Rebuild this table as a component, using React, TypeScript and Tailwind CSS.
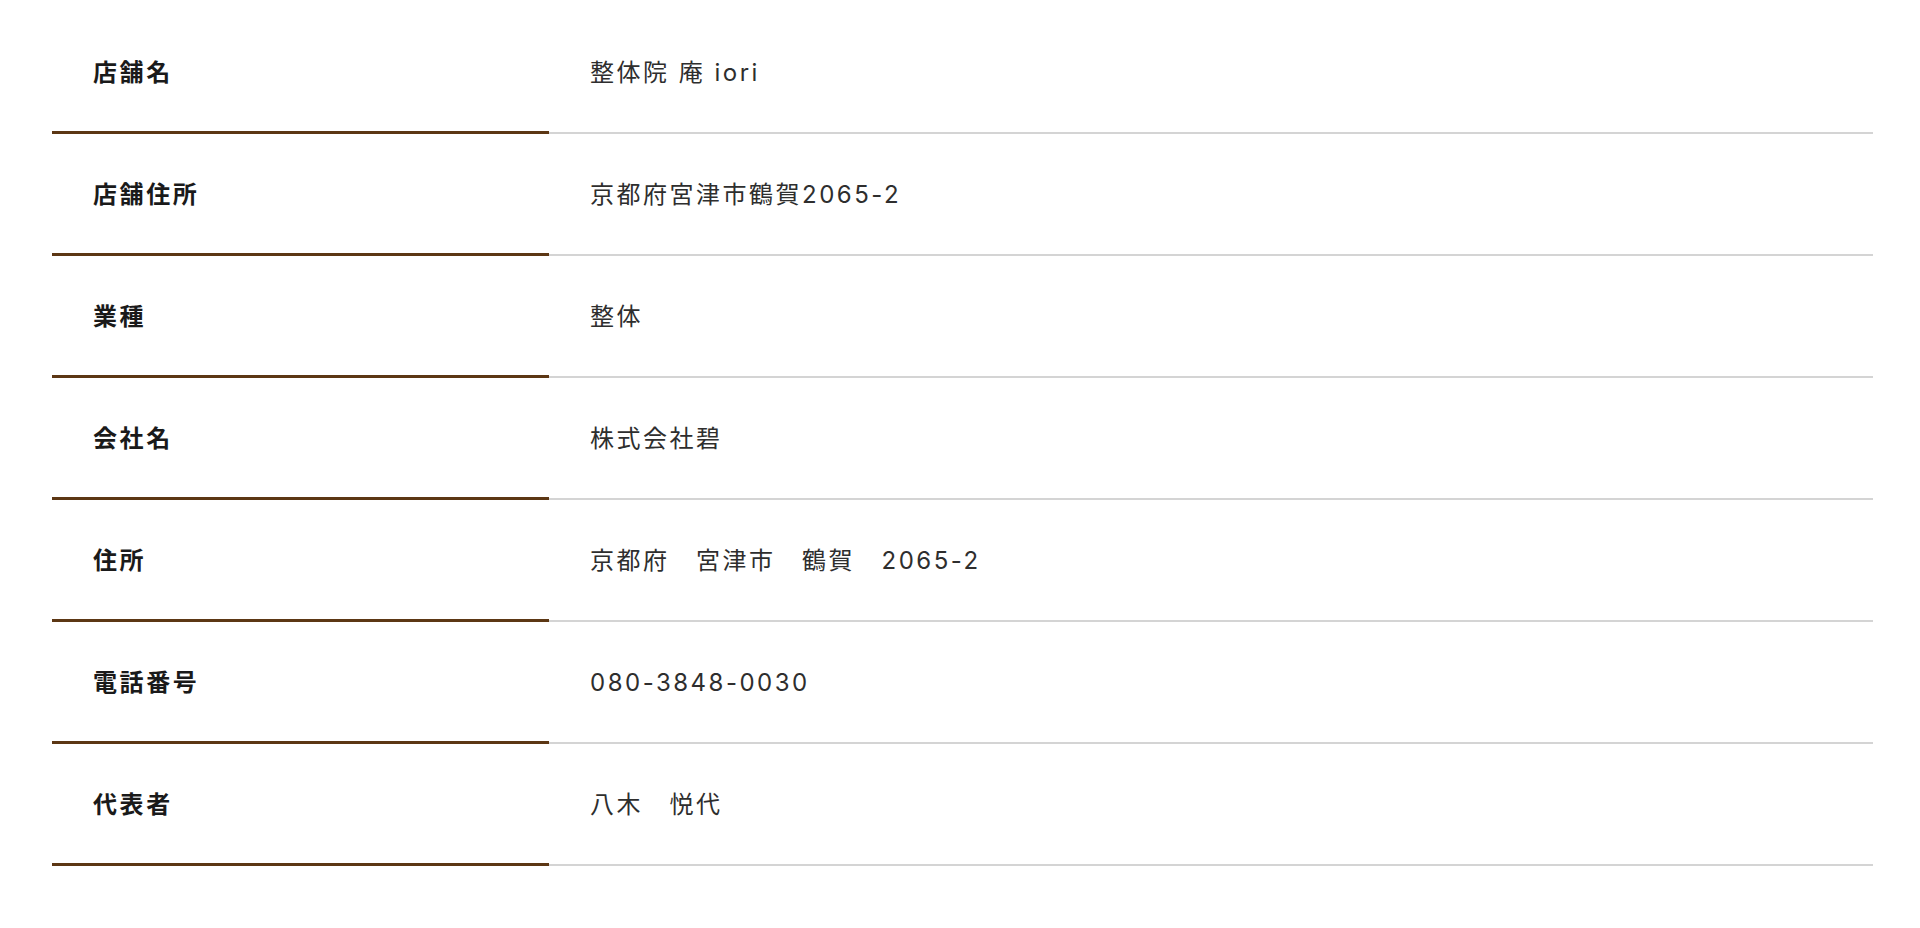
const ROWS: { label: string; value: string }[] = [
  { label: '店舗名', value: '整体院 庵 iori' },
  { label: '店舗住所', value: '京都府宮津市鶴賀2065-2' },
  { label: '業種', value: '整体' },
  { label: '会社名', value: '株式会社碧' },
  { label: '住所', value: '京都府　宮津市　鶴賀　2065-2' },
  { label: '電話番号', value: '080-3848-0030' },
  { label: '代表者', value: '八木　悦代' },
];

export default function App() {
  return (
    <div
      className="min-h-screen bg-white pt-[12px] pl-[52px] pr-[47px]"
      style={{ fontFamily: 'Inter, "Noto Sans CJK JP", sans-serif' }}
    >
      {/* Company info table */}
      <dl className="flex flex-col">
        {ROWS.map((row) => (
          <div key={row.label} className="flex">
            <dt className="w-[497px] shrink-0 h-[122px] flex items-center pl-[41px] pt-[3px] border-b-[3px] border-[#5c3714] text-[24px] font-bold tracking-[2.6px] text-[#1a1a1a]">
              {row.label}
            </dt>
            <dd className="flex-1 h-[122px] flex items-center pl-[41px] pt-[2px] border-b-2 border-[#d4d4d4] text-[24px] tracking-[2.5px] text-[#2e2e2e]">
              {row.value}
            </dd>
          </div>
        ))}
      </dl>
    </div>
  );
}
